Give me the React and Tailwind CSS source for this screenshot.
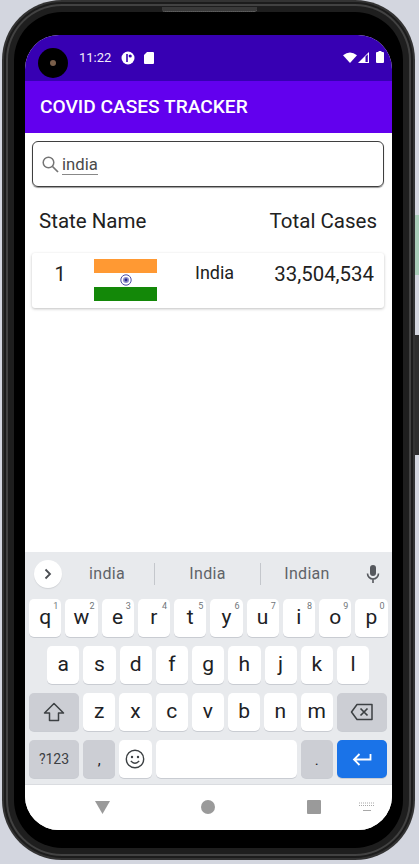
const rowOne = [['q', '1'], ['w', '2'], ['e', '3'], ['r', '4'], ['t', '5'], ['y', '6'], ['u', '7'], ['i', '8'], ['o', '9'], ['p', '0']]
const rowTwo = ['a', 's', 'd', 'f', 'g', 'h', 'j', 'k', 'l']
const rowThree = ['z', 'x', 'c', 'v', 'b', 'n', 'm']

function Key({ label, hint, className = 'w-[32.25px] bg-white text-[#202124]', children }) {
  return (
    <div className={`relative h-[38px] rounded-[5px] shadow-[0_1px_0_#c9ccd2] flex items-center justify-center text-[21px] ${className}`}>
      {label}
      {children}
      {hint && <span className="absolute top-[1px] right-[3px] text-[9px] leading-[12px] text-[#70757a]">{hint}</span>}
    </div>
  )
}

function StatusBar() {
  return (
    <div className="relative h-[46px] bg-[#3700b3] flex items-center text-white pl-[54px] pr-[8px]">
      <div className="absolute left-[13px] top-[13px] w-[30px] h-[30px] rounded-full bg-black flex items-center justify-center">
        <div className="w-[6px] h-[6px] rounded-full bg-[#7a5f4a]" />
      </div>
      <span className="text-[13px] leading-[16px] mt-[-1px] text-[#f1ecfa]">11:22</span>
      <svg className="ml-[10px]" width="14" height="14" viewBox="0 0 14 14">
        <circle cx="7" cy="7" r="6.5" fill="#fff" />
        <path d="M6 3v8" stroke="#3700b3" strokeWidth="1.6" />
        <circle cx="9.2" cy="5" r="1.6" fill="#3700b3" />
      </svg>
      <svg className="ml-[9px]" width="10" height="12" viewBox="0 0 10 12">
        <path d="M3 0h6a1 1 0 0 1 1 1v10a1 1 0 0 1-1 1H1a1 1 0 0 1-1-1V3z" fill="#fff" />
      </svg>
      <div className="ml-auto flex items-center mt-[-2px]">
        <svg width="14" height="11" viewBox="0 0 14 11">
          <path d="M0 3.200Q7-2.400 14 3.200L7 11z" fill="#fff" />
        </svg>
        <svg className="ml-[1px]" width="11" height="11" viewBox="0 0 11 11">
          <path d="M11 0v11H0z" fill="#fff" />
          <path d="M7.500 4.500v5.500h2.300V2.300z" fill="#3700b3" />
        </svg>
        <svg className="ml-[7px]" width="8" height="12" viewBox="0 0 8 12">
          <path d="M2.500 0h3v1H7a1 1 0 0 1 1 1v9a1 1 0 0 1-1 1H1a1 1 0 0 1-1-1V2a1 1 0 0 1 1-1h1.500z" fill="#fff" />
        </svg>
      </div>
    </div>
  )
}

function Flag() {
  return (
    <div className="w-[63px] h-[42px] flex flex-col shrink-0">
      <div className="h-[14px] bg-[#ff9933]" />
      <div className="h-[14px] bg-white flex items-center justify-center">
        <svg width="12" height="12" viewBox="0 0 12 12">
          <circle cx="6" cy="6" r="5.200" fill="#fff" stroke="#4d4da6" strokeWidth="1" />
          <circle cx="6" cy="6" r="3" fill="#8f8fcb" />
          <circle cx="6" cy="6" r="1.400" fill="#2a2a8c" />
        </svg>
      </div>
      <div className="h-[14px] bg-[#138808]" />
    </div>
  )
}

function Keyboard() {
  return (
    <div className="h-[233px] bg-[#e8eaed] border-b border-[#dadce0] flex flex-col px-[4px]">
      <div className="h-[47px] flex items-center text-[16px] text-[#5f6368] tracking-[0.3px] pb-[4px]">
        <div className="w-[28px] h-[28px] ml-[5px] rounded-full bg-white shadow-[0_1px_1px_#d0d2d6] flex items-center justify-center">
          <svg width="10" height="12" viewBox="0 0 10 12" fill="none">
            <path d="M2.500 1.500 7 6l-4.500 4.500" stroke="#4a4d52" strokeWidth="1.800" />
          </svg>
        </div>
        <span className="w-[92px] pr-[2px] text-center">india</span>
        <div className="w-px h-[22px] bg-[#c4c7cc]" />
        <span className="w-[105px] text-center">India</span>
        <div className="w-px h-[22px] bg-[#c4c7cc]" />
        <span className="w-[92px] text-center">Indian</span>
        <svg className="ml-[12px]" width="16" height="20" viewBox="0 0 16 20" fill="none">
          <rect x="5" y="1" width="6" height="11" rx="3" fill="#55585d" />
          <path d="M2.500 9.500a5.500 5.500 0 0 0 11 0M8 15v4" stroke="#55585d" strokeWidth="1.600" />
        </svg>
      </div>
      <div className="flex gap-[4px]">
        {rowOne.map(([k, n]) => <Key key={k} label={k} hint={n} />)}
      </div>
      <div className="flex gap-[4px] mt-[9px] pl-[18px]">
        {rowTwo.map((k) => <Key key={k} label={k} />)}
      </div>
      <div className="flex gap-[4px] mt-[9px]">
        <Key className="w-[50px] bg-[#ccced4]">
          <svg width="22" height="20" viewBox="0 0 22 20" fill="none">
            <path d="M11 1.500 20.500 11H15.500v7.500h-9V11H1.500z" stroke="#3c4043" strokeWidth="1.500" strokeLinejoin="round" />
          </svg>
        </Key>
        {rowThree.map((k) => <Key key={k} label={k} />)}
        <Key className="w-[50px] bg-[#ccced4]">
          <svg width="24" height="18" viewBox="0 0 24 18" fill="none">
            <path d="M7 1.500h15v15H7L1.500 9z" stroke="#3c4043" strokeWidth="1.500" strokeLinejoin="round" />
            <path d="m10.500 5.500 7 7m0-7-7 7" stroke="#3c4043" strokeWidth="1.700" />
          </svg>
        </Key>
      </div>
      <div className="flex gap-[4px] mt-[9px]">
        <Key className="w-[50px] bg-[#ccced4] text-[#3c4043] !text-[14px]" label="?123" />
        <Key className="w-[32.25px] bg-[#ccced4] text-[#202124] items-end pb-[7px] !text-[15px]" label="," />
        <Key>
          <svg width="20" height="20" viewBox="0 0 20 20" fill="none">
            <circle cx="10" cy="10" r="8.700" stroke="#3c4043" strokeWidth="1.400" />
            <circle cx="7" cy="8" r="1.200" fill="#3c4043" />
            <circle cx="13" cy="8" r="1.200" fill="#3c4043" />
            <path d="M5.800 12q4.200 4.500 8.400 0" stroke="#3c4043" strokeWidth="1.300" />
          </svg>
        </Key>
        <Key className="w-[141px] bg-white" />
        <Key className="w-[32.25px] bg-[#ccced4] text-[#202124] items-end pb-[7px] !text-[15px]" label="." />
        <Key className="w-[50px] bg-[#1a73e8]">
          <svg width="20" height="14" viewBox="0 0 20 14" fill="none">
            <path d="M18.500 2v5.500H2.500M7.500 2 2 7.500 7.500 13" stroke="#fff" strokeWidth="1.800" />
          </svg>
        </Key>
      </div>
    </div>
  )
}

function NavBar() {
  return (
    <div className="h-[45px] bg-white flex items-center pb-[1px]">
      <svg className="ml-[70px]" width="15" height="13" viewBox="0 0 15 13"><path d="M0 0h15L7.500 13z" fill="#9a9a9a" /></svg>
      <div className="ml-[91px] w-[14px] h-[14px] rounded-full bg-[#9a9a9a]" />
      <div className="ml-[92px] w-[14px] h-[14px] bg-[#9a9a9a] rounded-[1px]" />
      <svg className="ml-[38px]" width="16" height="10" viewBox="0 0 16 10" fill="none">
        <path d="M0 1h16M0 3.500h16" stroke="#a8a8a8" strokeWidth="1.200" strokeDasharray="1 1" />
        <path d="M4 8.500h8" stroke="#a8a8a8" strokeWidth="1.200" />
      </svg>
    </div>
  )
}

export default function App() {
  return (
    <div className="relative w-[419px] h-[864px] bg-[#d3d6df] overflow-hidden font-['Roboto',sans-serif]">
      {/* side buttons peeking out at the right edge */}
      <div className="absolute right-0 top-[215px] w-[4px] h-[60px] bg-[#a9cdb9]" />
      <div className="absolute right-0 top-[335px] w-[4px] h-[120px] bg-[#2e2e2e]" />
      <div className="relative ml-[2px] w-[413px] h-[860px] rounded-[60px] bg-[#333333] p-[2px]">
        <div className="w-full h-full rounded-[58px] bg-[#1c1c1c] p-[2px]">
          <div className="w-full h-full rounded-[56px] bg-[#424242] p-[2px]">
            <div className="w-full h-full rounded-[54px] bg-[#1e1e1e] p-[6px]">
              <div className="w-full h-full rounded-[48px] bg-black pl-[11px] pr-[11px] pt-[23px]">
                <div className="w-[367px] h-[795px] rounded-[34px] overflow-hidden bg-white flex flex-col">
                  <StatusBar />
                  <div className="h-[52px] bg-[#6200ee] flex items-center px-[15px] pt-[1px] text-white text-[19.150px] font-medium">
                    COVID CASES TRACKER
                  </div>
                  <div className="flex-1 flex flex-col">
                    <div className="ml-[7px] mr-[8px] mt-[8px] h-[46px] rounded-[6px] border border-[#3f3f3f] shadow-[0_1px_1px_#999] flex items-center pl-[9px]">
                      <svg width="17" height="17" viewBox="0 0 17 17" fill="none">
                        <circle cx="6.500" cy="6.500" r="5.300" stroke="#757575" strokeWidth="1.500" />
                        <path d="m10.500 10.500 5.500 5.500" stroke="#757575" strokeWidth="1.700" />
                      </svg>
                      <span className="ml-[3px] mt-[1px] text-[16.700px] leading-[19px] text-[#4a4a4a] border-b border-[#888]">india</span>
                    </div>
                    <div className="flex justify-between pl-[14px] pr-[15px] mt-[22px] text-[20.500px] leading-[24px] text-[#212121]">
                      <span>State Name</span>
                      <span>Total Cases</span>
                    </div>
                    <div className="ml-[7px] mr-[8px] mt-[20px] h-[55px] rounded-[3px] bg-white shadow-[0_1px_3px_rgba(0,0,0,0.25)] flex items-start text-[#212121]">
                      <span className="w-[56px] mt-[9px] text-center text-[20px] leading-[24px]">1</span>
                      <div className="mt-[6px] ml-[6px]"><Flag /></div>
                      <span className="ml-[38px] mt-[9px] text-[18px] leading-[22px]">India</span>
                      <span className="ml-auto mr-[10px] mt-[9px] text-[20.400px] leading-[24px]">33,504,534</span>
                    </div>
                  </div>
                  <Keyboard />
                  <NavBar />
                </div>
              </div>
            </div>
          </div>
        </div>
        {/* speaker grille */}
        <div className="absolute top-[7px] left-[160px] w-[95px] h-[5px] rounded-b-[3px] bg-[#3a3a3a] border-b border-dotted border-[#777]" />
      </div>
    </div>
  )
}
